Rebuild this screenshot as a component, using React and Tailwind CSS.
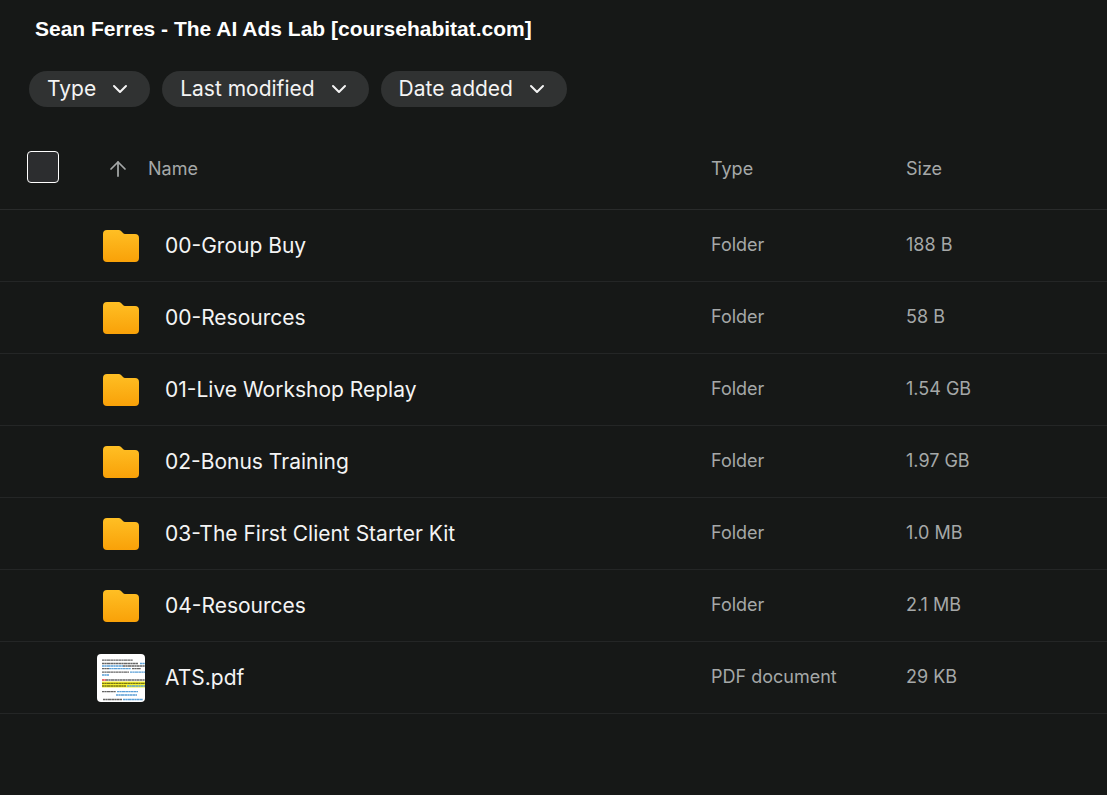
import { ArrowUp, ChevronDown } from "lucide-react";

const filters = ["Type", "Last modified", "Date added"];

const files = [
  { name: "00-Group Buy", type: "Folder", size: "188 B" },
  { name: "00-Resources", type: "Folder", size: "58 B" },
  { name: "01-Live Workshop Replay", type: "Folder", size: "1.54 GB" },
  { name: "02-Bonus Training", type: "Folder", size: "1.97 GB" },
  { name: "03-The First Client Starter Kit", type: "Folder", size: "1.0 MB" },
  { name: "04-Resources", type: "Folder", size: "2.1 MB" },
  { name: "ATS.pdf", type: "PDF document", size: "29 KB" },
];

function FolderIcon() {
  return (
    <svg viewBox="0 0 48 48" className="w-12 h-12" aria-hidden="true">
      <defs>
        <linearGradient id="folder" x1="0" y1="0" x2="0" y2="1">
          <stop offset="0" stopColor="#ffbf24" />
          <stop offset="1" stopColor="#f9a108" />
        </linearGradient>
      </defs>
      <path
        fill="url(#folder)"
        d="M6 12a4 4 0 0 1 4-4h11.5a4 4 0 0 1 2.800 1.200l1.700 1.700A4 4 0 0 0 28 12H38a4 4 0 0 1 4 4v20a4 4 0 0 1-4 4H10a4 4 0 0 1-4-4z"
      />
    </svg>
  );
}

// Page preview of the document: dark text, blue links, one highlighted block
function PdfThumbnail() {
  return (
    <svg viewBox="0 0 48 48" className="w-12 h-12 rounded" aria-hidden="true">
      <rect width="48" height="48" fill="#fff" />
      <path fill="#f5f02c" d="M5 27.500h43v3.500H5zM5 31h43v2.500H5z" />
      <g fill="none" strokeWidth="1.300" strokeDasharray="2.600 .3 1.600 .3 3.400 .3">
        <path
          stroke="#666"
          d="M5 6.200h31M5 9.500h36M26 12h22M5 14.600h7M35 14.600h9M5 18.200h27M9 26h39M5 37.600h14M6 45.500h19"
        />
        <path
          stroke="#5a9fd6"
          d="M43 9.500h5M5 12h21M12 14.600h22M33 18.200h15M5 21h7M30 32h18M20 37.600h21M19 41h21M26 45.500h20"
        />
        <path stroke="#77751a" d="M5 29.300h43M5 32h24" />
        <path stroke="#e03a3a" d="M5 26h4" />
      </g>
    </svg>
  );
}

export default function App() {
  return (
    <main className="min-h-screen bg-[#161817] font-['Inter',sans-serif] text-[#f4f4f4]">
      {/* Header */}
      <h1 className="px-[35px] pt-4 font-['Liberation_Sans',sans-serif] text-[21px] leading-[26px] font-bold text-white">
        Sean Ferres - The AI Ads Lab [coursehabitat.com]
      </h1>

      {/* Filters */}
      <div className="flex flex-wrap gap-3 px-[29px] pt-[29px] pb-[19px]">
        {filters.map((filter) => (
          <button
            key={filter}
            type="button"
            className="flex h-9 items-center gap-3 rounded-full bg-[#303232] px-[18px] text-[21px] hover:bg-[#3a3c3c]"
          >
            {filter}
            <ChevronDown className="w-6 h-6" strokeWidth={2} />
          </button>
        ))}
      </div>

      {/* File list */}
      <table className="w-full table-fixed border-separate border-spacing-0 text-left">
        <thead>
          <tr className="h-[84px] text-lg text-[#a5a8a8] [&>th]:border-b [&>th]:border-[#292b2b] [&>th]:p-0 [&>th]:font-normal">
            <th className="w-[97px]">
              <div className="flex pb-0.5 pl-[27px]">
                <input
                  type="checkbox"
                  aria-label="Select all"
                  className="w-8 h-8 appearance-none rounded border border-white bg-[#2c2d2f] checked:bg-amber-400"
                />
              </div>
            </th>
            <th aria-sort="ascending">
              <button type="button" className="flex items-center gap-[18px] pt-0.5 pl-[9px]">
                <ArrowUp className="w-6 h-6" strokeWidth={1.75} />
                Name
              </button>
            </th>
            <th className="w-[195px]">
              <div className="pt-0.5">Type</div>
            </th>
            <th className="w-[201px]">
              <div className="pt-0.5">Size</div>
            </th>
          </tr>
        </thead>
        <tbody>
          {files.map((file) => (
            <tr
              key={file.name}
              className="h-18 hover:bg-white/5 [&>td]:border-b [&>td]:border-[#242626] [&>td]:p-0"
            >
              <td></td>
              <td>
                <a href="#" className="flex items-center gap-5 text-[21px]">
                  {file.type === "Folder" ? <FolderIcon /> : <PdfThumbnail />}
                  {file.name}
                </a>
              </td>
              <td className="text-lg text-[#a5a8a8]">
                <div className="pb-0.5">{file.type}</div>
              </td>
              <td className="text-lg text-[#a5a8a8]">
                <div className="pb-0.5">{file.size}</div>
              </td>
            </tr>
          ))}
        </tbody>
      </table>
    </main>
  );
}
